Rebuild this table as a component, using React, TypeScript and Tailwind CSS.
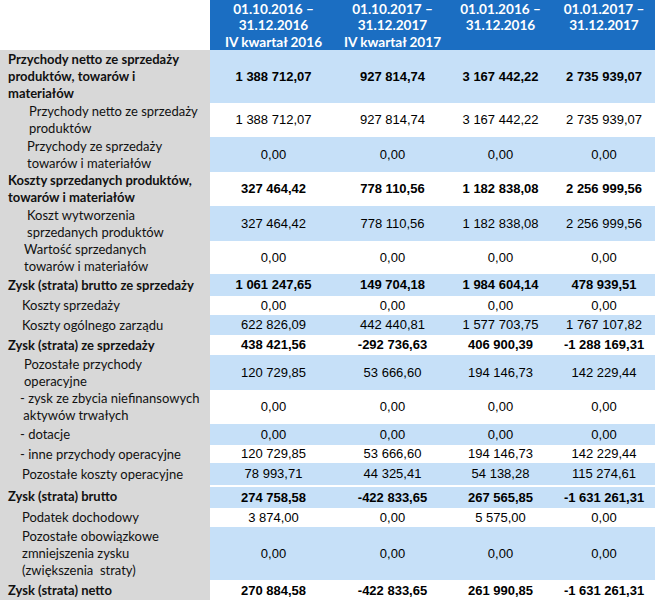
type Row = {
  label: string[];
  values: string[];
  bold?: boolean;
  blue?: boolean;
  h: string;
  indent: string;
  gap?: boolean;
};

const rows: Row[] = [
  {
    label: ["Przychody netto ze sprzedaży", "produktów, towarów i", "materiałów"],
    values: ["1 388 712,07", "927 814,74", "3 167 442,22", "2 735 939,07"],
    bold: true,
    blue: true,
    h: "h-[53px]",
    indent: "pl-[8px]",
  },
  {
    label: ["Przychody netto ze sprzedaży", "produktów"],
    values: ["1 388 712,07", "927 814,74", "3 167 442,22", "2 735 939,07"],
    h: "h-[34px]",
    indent: "pl-[29px]",
  },
  {
    label: ["Przychody ze sprzedaży", "towarów i materiałów"],
    values: ["0,00", "0,00", "0,00", "0,00"],
    blue: true,
    h: "h-[35px]",
    indent: "pl-[27px]",
  },
  {
    label: ["Koszty sprzedanych produktów,", "towarów i materiałów"],
    values: ["327 464,42", "778 110,56", "1 182 838,08", "2 256 999,56"],
    bold: true,
    h: "h-[34px]",
    indent: "pl-[8px]",
  },
  {
    label: ["Koszt wytworzenia", "sprzedanych produktów"],
    values: ["327 464,42", "778 110,56", "1 182 838,08", "2 256 999,56"],
    blue: true,
    h: "h-[35px]",
    indent: "pl-[27px]",
  },
  {
    label: ["Wartość sprzedanych", "towarów i materiałów"],
    values: ["0,00", "0,00", "0,00", "0,00"],
    h: "h-[33px]",
    indent: "pl-[24px]",
  },
  {
    label: ["Zysk (strata) brutto ze sprzedaży"],
    values: ["1 061 247,65", "149 704,18", "1 984 604,14", "478 939,51"],
    bold: true,
    blue: true,
    h: "h-[22px]",
    indent: "pl-[8px]",
  },
  {
    label: ["Koszty sprzedaży"],
    values: ["0,00", "0,00", "0,00", "0,00"],
    h: "h-[19px]",
    indent: "pl-[22px]",
  },
  {
    label: ["Koszty ogólnego zarządu"],
    values: ["622 826,09", "442 440,81", "1 577 703,75", "1 767 107,82"],
    blue: true,
    h: "h-[20px]",
    indent: "pl-[22px]",
  },
  {
    label: ["Zysk (strata) ze sprzedaży"],
    values: ["438 421,56", "-292 736,63", "406 900,39", "-1 288 169,31"],
    bold: true,
    h: "h-[20px]",
    indent: "pl-[8px]",
  },
  {
    label: ["Pozostałe przychody", "operacyjne"],
    values: ["120 729,85", "53 666,60", "194 146,73", "142 229,44"],
    blue: true,
    h: "h-[35px]",
    indent: "pl-[24px]",
  },
  {
    label: ["- zysk ze zbycia niefinansowych", "\u00a0aktywów trwałych"],
    values: ["0,00", "0,00", "0,00", "0,00"],
    h: "h-[34px]",
    indent: "pl-[20px]",
  },
  {
    label: ["- dotacje"],
    values: ["0,00", "0,00", "0,00", "0,00"],
    blue: true,
    h: "h-[21px]",
    indent: "pl-[20px]",
  },
  {
    label: ["- inne przychody operacyjne"],
    values: ["120 729,85", "53 666,60", "194 146,73", "142 229,44"],
    h: "h-[18px]",
    indent: "pl-[20px]",
  },
  {
    label: ["Pozostałe koszty operacyjne"],
    values: ["78 993,71", "44 325,41", "54 138,28", "115 274,61"],
    blue: true,
    h: "h-[22px]",
    indent: "pl-[22px]",
  },
  {
    label: ["Zysk (strata) brutto"],
    values: ["274 758,58", "-422 833,65", "267 565,85", "-1 631 261,31"],
    bold: true,
    blue: true,
    gap: true,
    h: "h-[23px]",
    indent: "pl-[8px]",
  },
  {
    label: ["Podatek dochodowy"],
    values: ["3 874,00", "0,00", "5 575,00", "0,00"],
    h: "h-[19px]",
    indent: "pl-[22px]",
  },
  {
    label: ["Pozostałe obowiązkowe", "zmniejszenia zysku", "(zwiększenia\u00a0 straty)"],
    values: ["0,00", "0,00", "0,00", "0,00"],
    blue: true,
    h: "h-[53px]",
    indent: "pl-[22px]",
  },
  {
    label: ["Zysk (strata) netto"],
    values: ["270 884,58", "-422 833,65", "261 990,85", "-1 631 261,31"],
    bold: true,
    h: "h-[21px]",
    indent: "pl-[8px]",
  },
];

const colW = ["w-[127px]", "w-[111px]", "w-[105px]", "w-[102px]"];

const headers = [
  ["01.10.2016 –", "31.12.2016", "IV kwartał 2016"],
  ["01.10.2017 –", "31.12.2017", "IV kwartał 2017"],
  ["01.01.2016 –", "31.12.2016"],
  ["01.01.2017 –", "31.12.2017"],
];

export default function App() {
  return (
    <div className="w-[655px] h-[600px] overflow-hidden bg-white font-['Lato',sans-serif]">
      <div className="flex h-[50px]">
        <div className="w-[210px] bg-white" />
        <div className="flex flex-1 bg-[#1b6ec2]">
          {headers.map((h, i) => (
            <div
              key={i}
              className={`${colW[i]} pt-[1px] text-center text-[13.6px] leading-[16.3px] font-bold text-white`}
            >
              {h.map((t) => (
                <div key={t}>{t}</div>
              ))}
            </div>
          ))}
        </div>
      </div>
      {rows.map((r, i) => (
        <div key={i} className={`flex ${r.h}`}>
          <div
            className={`w-[210px] shrink-0 bg-[#d8d8d8] ${r.indent} flex flex-col justify-center text-[13px] leading-[16.8px] text-[#111] ${
              r.bold ? "font-bold" : ""
            }`}
          >
            {r.label.map((t) => (
              <div key={t} className="whitespace-nowrap">
                {t}
              </div>
            ))}
          </div>
          <div
            className={`flex flex-1 ${r.blue ? "bg-[#c6e0f8]" : "bg-white"} ${
              r.gap ? "border-t-2 border-white" : ""
            }`}
          >
            {r.values.map((v, j) => (
              <div
                key={j}
                className={`${colW[j]} flex items-center justify-center font-['Liberation_Sans',Arial,sans-serif] text-[13px] text-black ${
                  r.bold ? "font-bold" : ""
                }`}
              >
                {v}
              </div>
            ))}
          </div>
        </div>
      ))}
    </div>
  );
}
